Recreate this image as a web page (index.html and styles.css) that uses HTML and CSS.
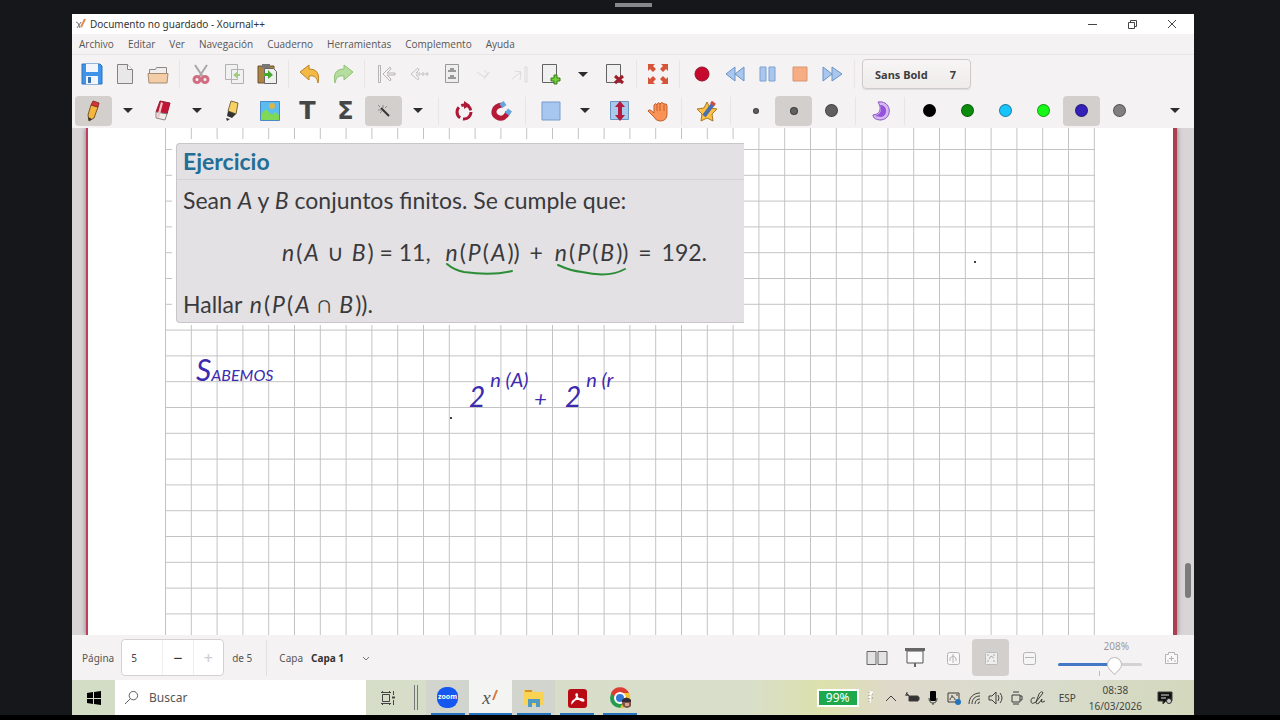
FILE: index.html
```html
<!DOCTYPE html>
<html lang="es">
<head>
    <meta charset="UTF-8">
    <meta name="viewport" content="width=device-width, initial-scale=1.0">
    <title>Documento no guardado - Xournal++</title>
    <link rel="stylesheet" href="styles.css">
</head>
<body>
    <div class="share-handle"></div>
    <div class="window">
        <header class="titlebar">
            <svg class="app-icon" viewBox="0 0 12 12"><path d="M1 4l2 1 2 5M6 4L2 10" stroke="#777" fill="none"/><path d="M10 1L6 9" stroke="#e08a50" stroke-width="2"/></svg>
            <h1>Documento no guardado - Xournal++</h1>
            <div class="window-buttons">
                <button aria-label="Minimizar"><svg viewBox="0 0 10 10"><path d="M1 5.500h9"/></svg></button>
                <button aria-label="Restaurar"><svg viewBox="0 0 10 10"><path d="M1.500 3.500h6v6h-6zM3.500 3V1.500h6v6H8"/></svg></button>
                <button aria-label="Cerrar"><svg viewBox="0 0 10 10"><path d="M1 1l8 8M9 1L1 9"/></svg></button>
            </div>
        </header>

        <nav class="menubar">
            <a href="#">Archivo</a>
            <a href="#">Editar</a>
            <a href="#">Ver</a>
            <a href="#">Navegación</a>
            <a href="#">Cuaderno</a>
            <a href="#">Herramientas</a>
            <a href="#">Complemento</a>
            <a href="#">Ayuda</a>
        </nav>

        <div class="toolbar main-tools">
            <button aria-label="Guardar"><svg viewBox="0 0 22 22"><path d="M1 1h18l2 2v18H1z" fill="#3f93e8" stroke="#2f72bd"/><path d="M5 1h12v8H5zM5 13h12v8H5z" fill="#f2f6fb"/><path d="M7 14h3v6H7z" fill="#3573b5"/></svg></button>
            <button aria-label="Nuevo"><svg viewBox="0 0 22 22"><path d="M3.500 1.500h10l5 5v14h-15z" fill="#e9e8e9" stroke="#858285"/><path d="M13.500 1.500v5h5" fill="#fff" stroke="#858285"/></svg></button>
            <button aria-label="Abrir"><svg viewBox="0 0 22 22"><path d="M2.500 18V6.500h6l1-2h10V18" fill="#eee" stroke="#8f8781"/><path d="M1 10.500h20l-1 9.500H2z" fill="#f2cda7" stroke="#a98b70"/></svg></button>
            <span class="sep"></span>
            <button aria-label="Cortar"><svg class="faded" viewBox="0 0 22 22"><path d="M5 2l8 12M17 2L9 14" stroke="#777" stroke-width="2"/><circle cx="7" cy="16.500" r="3" fill="none" stroke="#bb1837" stroke-width="3"/><circle cx="15" cy="16.500" r="3" fill="none" stroke="#bb1837" stroke-width="3"/></svg></button>
            <button aria-label="Copiar"><svg class="faded" viewBox="0 0 22 22"><path d="M2.500 1.500h12v15h-12zM8.500 6.500h12v14h-12z" fill="#f1f1f1" stroke="#888"/><path d="M15 8l-5 4 5 4v-3h2v-2h-2z" fill="#68b538"/></svg></button>
            <button aria-label="Pegar"><svg viewBox="0 0 22 22"><path d="M2 3h16v17H2z" fill="#ad8341" stroke="#6d522c"/><path d="M6 1h8v4H6z" fill="#777"/><path d="M8.500 5.500h9l3 3v12h-12z" fill="#efefef" stroke="#666"/><path d="M8 10h4V7l5 5-5 4v-3H8z" fill="#48a832"/></svg></button>
            <span class="sep"></span>
            <button aria-label="Deshacer"><svg viewBox="0 0 22 22"><path d="M1 9l9-7v4c8 0 11 5 9 14-1-5-3-8-9-7v4z" fill="#f4b944" stroke="#b98527"/></svg></button>
            <button aria-label="Rehacer"><svg viewBox="0 0 22 22"><path d="M21 9l-9-7v4C4 6 1 11 3 20c1-5 3-8 9-7v4z" fill="#b5dd9d" stroke="#8bc375"/></svg></button>
            <span class="sep"></span>
            <button aria-label="Primera página"><svg class="pale" viewBox="0 0 22 22"><path d="M3.500 2.500h2v17h-2zM8 11l7-7 1 2-4 4h8v2h-8l4 4-1 2z"/></svg></button>
            <button aria-label="Página anterior"><svg class="paler" viewBox="0 0 22 22"><path d="M3 11l7-6 1 2-3 3h4v2H8l3 3-1 2zM14 10h2v2h-2zM18 10h2v2h-2z"/></svg></button>
            <button aria-label="Ir a página"><svg class="pale" viewBox="0 0 22 22"><path d="M4.500 1.500h13v18h-13z" fill="#eee" stroke="#999"/><path d="M7 8h8M9 6h4M7 15h8M9 13h4" stroke="#999" stroke-width="2"/></svg></button>
            <button aria-label="Página siguiente"><svg class="palest" viewBox="0 0 22 22"><path d="M3 9l7 5 6-5M10 7l4 4-4 5"/></svg></button>
            <button aria-label="Última página"><svg class="palest" viewBox="0 0 22 22"><path d="M5 16l9-7-1 8M8 8l6 1M18 4h2v15h-2z"/></svg></button>
            <button aria-label="Insertar página"><svg viewBox="0 0 22 22"><path d="M2.500 1.500h14v18h-14z" fill="#f0f0f0" stroke="#626262"/><path d="M14 12h3v3h3v3h-3v3h-3v-3h-3v-3h3z" fill="#72cf35" stroke="#397b1e"/></svg></button>
            <button class="caret" aria-label="Tipo de página"></button>
            <button aria-label="Borrar página"><svg viewBox="0 0 22 22"><path d="M2.500 1.500h14v18h-14z" fill="#f0f0f0" stroke="#626262"/><path d="M11 13l8 7M19 13l-8 7" stroke="#9d1d2b" stroke-width="3"/></svg></button>
            <span class="sep"></span>
            <button aria-label="Pantalla completa"><svg viewBox="0 0 22 22"><path d="M1 1h7L6 3l3 3-3 3-3-3-2 2zM21 1h-7l2 2-3 3 3 3 3-3 2 2zM1 21h7l-2-2 3-3-3-3-3 3-2-2zM21 21h-7l2-2-3-3 3-3 3 3 2-2z" fill="#d65538"/></svg></button>
            <span class="sep"></span>
            <button aria-label="Grabar"><svg viewBox="0 0 22 22"><circle cx="12" cy="11" r="7" fill="#c6092d" stroke="#91112b"/></svg></button>
            <button aria-label="Retroceder"><svg viewBox="0 0 22 22"><path d="M12 4v14L3 11zM21 4v14l-9-7z" fill="#a9c7ec" stroke="#6b93c9"/></svg></button>
            <button aria-label="Pausa"><svg viewBox="0 0 22 22"><path d="M4 4h6v14H4zM13 4h6v14h-6z" fill="#a9c7ec" stroke="#7da1d2"/></svg></button>
            <button aria-label="Detener"><svg viewBox="0 0 22 22"><path d="M4 4h14v14H4z" fill="#f6ad83" stroke="#d99471"/></svg></button>
            <button aria-label="Avanzar"><svg viewBox="0 0 22 22"><path d="M1 4v14l9-7zM10 4v14l10-7z" fill="#a9c7ec" stroke="#6b93c9"/></svg></button>
            <span class="sep"></span>
            <button class="font-button"><span>Sans Bold</span><span>7</span></button>
        </div>

        <div class="toolbar pen-tools">
            <button class="active" aria-label="Lápiz"><svg viewBox="0 0 22 22"><path d="M8 5l7 2-4 11-5 3-1-6z" fill="#f5b63c" stroke="#795325"/><path d="M8 5l2-4 6 2-1 4z" fill="#d33531" stroke="#92302d"/><path d="M5 17l4 2-3 2z" fill="#333"/></svg></button>
            <button class="caret" aria-label="Opciones del lápiz"></button>
            <button aria-label="Borrador"><svg viewBox="0 0 22 22"><path d="M8 1l10 2-3 11-11-2z" fill="#c41436" stroke="#961b33"/><path d="M4 12l11 2-2 6-9-2z" fill="#f4eaea" stroke="#888"/><path d="M9 2l2 1-4 15-2-1z" fill="#f0c2c8"/></svg></button>
            <button class="caret" aria-label="Opciones del borrador"></button>
            <button aria-label="Resaltador"><svg viewBox="0 0 22 22"><path d="M10 1l7 2-2 11-8-3z" fill="#f8d165" stroke="#77683e"/><path d="M7 11l8 3-4 4-5-2zM5 18l4 1-3 2z" fill="#333"/></svg></button>
            <button aria-label="Imagen"><svg viewBox="0 0 22 22"><path d="M1.500 1.500h19v19h-19z" fill="#59bdf2" stroke="#4a8ac5"/><path d="M2 14l5-5 6 6 3-3 4 3v5H2z" fill="#7fd957"/><circle cx="13" cy="6" r="3" fill="#dbb54c"/></svg></button>
            <button class="letter" aria-label="Texto">T</button>
            <button class="letter" aria-label="Fórmula">Σ</button>
            <button class="active" aria-label="Reconocedor de formas"><svg viewBox="0 0 22 22"><path d="M8 8l8 8" stroke="#333" stroke-width="2"/><path d="M5 10h3M10 5v3M12 8l2-2M7 13l2-2M5 5l2 2" stroke="#888"/></svg></button>
            <button class="caret" aria-label="Más formas"></button>
            <span class="sep"></span>
            <button aria-label="Ajuste de rotación"><svg viewBox="0 0 22 22"><circle cx="11" cy="12" r="7" fill="none" stroke="#ae1938" stroke-width="3" stroke-dasharray="12 3"/><path d="M11 1l6 4-6 4z" fill="#ae1938"/></svg></button>
            <button aria-label="Ajuste a la cuadrícula"><svg viewBox="0 0 22 22"><path d="M11 5C2 6 1 14 6 17c5 3 9 0 11-5" fill="none" stroke="#b51b39" stroke-width="5"/><path d="M10 6l4-3M16 14l3-4" stroke="#65a6df" stroke-width="5"/></svg></button>
            <span class="sep"></span>
            <button aria-label="Seleccionar rectángulo"><svg viewBox="0 0 22 22"><path d="M2 2h18v18H2z" fill="#a7c7f1" stroke="#779ac9"/></svg></button>
            <button class="caret" aria-label="Tipos de selección"></button>
            <button aria-label="Espacio vertical"><svg viewBox="0 0 22 22"><path d="M1.500 1.500h18v18h-18z" fill="#a9c9ed" stroke="#6c96c4"/><path d="M11 1l5 6h-3v8h3l-5 6-5-6h3V7H6z" fill="#b31c3b"/></svg></button>
            <button aria-label="Mano"><svg viewBox="0 0 22 22"><path d="M7 13V5q2-3 3 0 1-4 3-1 2-3 4 0 3-1 3 2v8q0 7-7 7-4 0-6-4l-6-6q1-3 6 2z" fill="#fb9356" stroke="#bf602d"/><path d="M10 5v6M13 4v7M17 5v6" stroke="#bf602d"/></svg></button>
            <span class="sep"></span>
            <button aria-label="Predeterminado"><svg viewBox="0 0 22 22"><path d="M11 2l3 6 7 1-5 5 1 7-6-3-6 3 1-7-5-5 7-1z" fill="#ffc13f" stroke="#a87727"/><path d="M8 16L17 4" stroke="#496fae" stroke-width="4"/><path d="M15 2l4 3" stroke="#d44b3f" stroke-width="3"/></svg></button>
            <span class="sep"></span>
            <button aria-label="Fino"><span class="dot small"></span></button>
            <button class="active" aria-label="Medio"><span class="dot medium"></span></button>
            <button aria-label="Grueso"><span class="dot thick"></span></button>
            <span class="sep"></span>
            <button aria-label="Relleno"><svg viewBox="0 0 22 22"><path d="M8 2c14-2 15 17 3 18-5 0-8-2-8-5l4-1c4-3 4-7 1-12z" fill="#d5b8f0" stroke="#8d55c4"/><path d="M10 5c8 0 8 11 1 12l-6-1c6-2 7-6 5-11z" fill="#9552dc"/></svg></button>
            <span class="sep"></span>
            <button aria-label="Negro"><span class="dot black"></span></button>
            <button aria-label="Verde"><span class="dot green"></span></button>
            <button aria-label="Celeste"><span class="dot cyan"></span></button>
            <button aria-label="Verde claro"><span class="dot lime"></span></button>
            <button class="active" aria-label="Azul"><span class="dot blue"></span></button>
            <button aria-label="Gris"><span class="dot gray"></span></button>
            <button class="caret last" aria-label="Más herramientas"></button>
        </div>

        <main class="canvas">
            <div class="sheet">
                <svg class="grid" aria-hidden="true">
                    <defs>
                        <pattern id="squares" x="0" y="21" width="25.800" height="25.800" patternUnits="userSpaceOnUse">
                            <path d="M0 .5H25.800M.5 0V25.800" stroke="#c3c3c3" fill="none"/>
                        </pattern>
                    </defs>
                    <rect width="930" height="100%" fill="url(#squares)"/>
                </svg>
                <section class="exercise">
                    <h2>Ejercicio</h2>
                    <p>Sean <i>A</i> y <i>B</i> conjuntos finitos. Se cumple que:</p>
                    <p class="math formula">
                        <span><i>n</i>(<i>A</i> ∪ <i>B</i>) <span class="op">=</span> 11,</span>
                        <span><i>n</i>(<i>P</i>(<i>A</i>)) <span class="op">+</span> <i>n</i>(<i>P</i>(<i>B</i>)) <span class="op">=</span> 192.</span>
                    </p>
                    <p class="math">Hallar <i>n</i>(<i>P</i>(<i>A</i> ∩ <i>B</i>)).</p>
                </section>
                <!-- pen strokes and notes, placed freely on the page -->
                <svg class="ink" aria-hidden="true">
                    <path d="M359 136q7 6 17 8 28 4 48-1M470 137q13 6 24 7 27 6 43-3" stroke="#2c8d37" stroke-width="2" fill="none" stroke-linecap="round"/>
                    <circle cx="363" cy="290" r="1"/>
                    <circle cx="887" cy="134" r="1"/>
                </svg>
                <p class="note note-left"><span>S</span>ABEMOS</p>
                <p class="note note-power first">2<sup>n (A)</sup></p>
                <p class="note note-plus">+</p>
                <p class="note note-power second">2<sup>n (r</sup></p>
            </div>
            <div class="scroll-thumb"></div>
        </main>

        <div class="statusbar">
            <label for="page">Página</label>
            <div class="spin">
                <input id="page" type="text" value="5">
                <button aria-label="Menos">−</button>
                <button aria-label="Más" disabled>+</button>
            </div>
            <span>de 5</span>
            <span class="status-sep"></span>
            <label for="layer">Capa</label>
            <select id="layer"><option>Capa 1</option></select>
            <div class="view-tools">
                <button aria-label="Páginas emparejadas"><svg viewBox="0 0 22 22"><path d="M1 4.500h9v13H1zM12 4.500h9v13h-9z" fill="#e3e3e3" stroke="#666"/></svg></button>
                <button aria-label="Presentación"><svg viewBox="0 0 22 22"><path d="M3 4h16v12H3z" fill="#fafafa" stroke="#555"/><path d="M1 1h20v3H1zM10 16h2v4h-2z" fill="#666"/></svg></button>
                <button aria-label="Ajustar al ancho"><svg class="pale" viewBox="0 0 22 22"><rect x="5.500" y="5.500" width="12" height="12" rx="2" fill="#f9f9f9"/><path d="M8 14v-3l3-2 3 2v3M11 7v9"/></svg></button>
                <button class="active" aria-label="Zoom de página"><svg viewBox="0 0 22 22"><rect x="5.500" y="5.500" width="12" height="12" rx="1" fill="#eee" stroke="#bbb"/><path d="M9 12l2-3 3 2M7 8h2M13 8h2M7 14h2M13 14h2" stroke="#aaa" fill="none"/></svg></button>
                <button aria-label="Zoom al 100%"><svg class="pale" viewBox="0 0 22 22"><rect x="5.500" y="5.500" width="12" height="12" rx="2" fill="#f5f5f5"/><path d="M7 10.500h9"/></svg></button>
                <div class="zoom">
                    <label for="zoom">208%</label>
                    <input id="zoom" type="range" min="0" max="290" value="208">
                    <span class="tick"></span>
                </div>
                <button aria-label="Acercar"><svg class="pale" viewBox="0 0 22 22"><path d="M4.500 7.500h3v-2h6v2h3v9h-12z" fill="#f9f9f9"/><path d="M8 11.500h5M10.500 9v5M6 14h2M13 14h2"/></svg></button>
            </div>
        </div>

        <footer class="taskbar">
            <button class="start" aria-label="Inicio"><svg viewBox="0 0 16 16"><path d="M1 3l6-1v6H1zM8 2l7-1v7H8zM1 9h6v5l-6-1zM8 9h7v6l-7-1z"/></svg></button>
            <div class="search">
                <svg viewBox="0 0 16 16"><circle cx="10" cy="6" r="4.500"/><path d="M7 9l-6 6"/></svg>
                <input type="text" placeholder="Buscar" aria-label="Buscar">
            </div>
            <button class="task-view" aria-label="Vista de tareas"><svg viewBox="0 0 16 16"><path d="M2.500 4.500h7v7h-7zM2.500 1v2M9.500 1v2M2.500 13v2M9.500 13v2M1 2.500h10M1 13.500h10M13.500 1v4M13.500 10v5"/><path d="M12 7.500h3" stroke-width="2"/></svg></button>
            <span class="grip"></span>
            <div class="apps">
                <button class="open"><span class="zoom-logo">zoom</span></button>
                <button class="current"><span class="x-logo">x<svg viewBox="0 0 8 14"><path d="M6 1L2 11" stroke="#d87942" stroke-width="2"/></svg></span></button>
                <button class="open" aria-label="Explorador"><svg viewBox="0 0 22 22"><path d="M1 3h8l2 2h10v13H1z" fill="#fbd354"/><path d="M2 3h7v2H2z" fill="#d79426"/><path d="M5 20v-8h12v8h-4v-4H9v4z" fill="#519bc3"/></svg></button>
                <button aria-label="Acrobat"><svg viewBox="0 0 22 22"><rect x="2" y="2" width="19" height="19" rx="3" fill="#b80b14"/><path d="M6 16c5-5 6-8 5-9-2-1-1 5 6 7 2 0 0-3-4-2-4 0-7 2-7 4z" stroke="#fff" stroke-width="1.500" fill="none"/></svg></button>
                <button aria-label="Chrome"><svg viewBox="0 0 22 22"><circle cx="11" cy="11" r="10" fill="#269b50"/><path d="M2 6A10 10 0 0 1 20 6l-9 1-4 5z" fill="#dc3d32"/><path d="M20 6q5 15-9 15l5-9-5-6z" fill="#f6c52e"/><circle cx="11" cy="11" r="5" fill="#3477d4" stroke="#fff" stroke-width="2"/><circle cx="18" cy="16" r="5" fill="#79554d"/><path d="M13 13q4-5 9 0v2h-9z" fill="#332c35"/><path d="M16 16h4v3h-4z" fill="#d5a68d"/></svg></button>
            </div>
            <div class="tray">
                <span class="battery">99%</span>
                <svg class="narrow" viewBox="0 0 8 16"><path d="M2 3h4M2 7h2M2 11h2" stroke="#fff" stroke-width="3"/><path d="M2 2v12M5 4h2M5 8h2" stroke="#8e9285" stroke-dasharray="1 2"/></svg>
                <svg viewBox="0 0 16 16"><path d="M3 11l5-5 5 5"/></svg>
                <svg viewBox="0 0 16 16"><path d="M5 6h9v5H5zM14 7h1v3h-1" fill="#333"/><path d="M2 3l4 4M1 5h4M3 2v4"/></svg>
                <svg viewBox="0 0 16 16"><rect x="5" y="1" width="6" height="10" rx="1" fill="#000" stroke="none"/><path d="M4 8q0 5 4 5t4-5M8 13v2"/></svg>
                <svg viewBox="0 0 16 16"><path d="M2 3h11v9H2zM4 10c0-4 5-4 5 0M5 6h2M10 5h2"/><circle cx="12" cy="12" r="3" fill="#2474bb" stroke="none"/></svg>
                <svg viewBox="0 0 16 16"><path d="M2 14C2 7 7 3 13 3M5 14c0-5 3-8 8-8M8 14c0-3 2-5 5-5M11 14q0-2 2-2"/></svg>
                <svg viewBox="0 0 16 16"><path d="M1 6h3l4-4v12l-4-4H1zM10 5q2 3 0 6M12 3q4 5 0 10"/></svg>
                <svg viewBox="0 0 16 16"><path d="M3 5h8v7H3zM11 6h2v4h-2M4 2h6M4 14h6"/></svg>
                <svg viewBox="0 0 16 16"><path d="M5 8q-4-1-4 3t5 1l7-9q-1-3-4 1l-3 8q0 3 3 1l3-4q-2 5 3 2"/></svg>
                <span class="lang">ESP</span>
                <time class="clock"><span>08:38</span><span>16/03/2026</span></time>
                <svg class="notice" viewBox="0 0 16 16"><path d="M1 2h14v9H9l-3 3v-3H1z" fill="#111"/><path d="M4 5h8M4 8h5" stroke="#ddd"/><circle cx="12" cy="11" r="2.500" fill="#ccc" stroke="#333"/></svg>
            </div>
        </footer>
    </div>
</body>
</html>
```
FILE: styles.css
```css
* {
    box-sizing: border-box;
}
body {
    margin: 0;
    height: 100vh;
    padding: 14px 86px 5px 72px;
    background: linear-gradient(to top, #000 5px, #15171b 5px);
    font-family: "Noto Sans", sans-serif;
    font-size: 10px;
    color: #555;
}
button {
    border: none;
    background: none;
    padding: 0;
    font: inherit;
    color: inherit;
    display: flex;
    align-items: center;
    justify-content: center;
    flex: none;
}
svg {
    display: block;
    flex: none;
}
.share-handle {
    position: absolute;
    top: 3px;
    left: 50%;
    width: 37px;
    height: 4px;
    margin-left: -25px;
    background: #85878a;
}
.window {
    height: 100%;
    display: flex;
    flex-direction: column;
    background: #f5f2f3;
}

/* title and menu */
.titlebar {
    height: 20px;
    display: flex;
    align-items: center;
    gap: 3px;
    padding-left: 3px;
    background: #fff;
}
.titlebar h1 {
    margin: 0;
    font-size: 10px;
    font-weight: 400;
    color: #333;
}
.app-icon {
    width: 12px;
    height: 12px;
}
.window-buttons {
    display: flex;
    margin-left: auto;
}
.window-buttons button {
    width: 40px;
    height: 20px;
    padding-right: 4px;
}
.window-buttons svg {
    width: 10px;
    height: 10px;
    fill: none;
    stroke: #444;
}
.menubar {
    height: 21px;
    display: flex;
    align-items: center;
    gap: 14px;
    padding-left: 7px;
    border-bottom: 1px solid #e8e5e6;
    font-family: "Open Sans", sans-serif;
}
.menubar a {
    color: #555;
    text-decoration: none;
}

/* toolbars */
.toolbar {
    display: flex;
    align-items: center;
    gap: 1px;
    padding: 0 4px;
}
.main-tools {
    height: 38px;
}
.pen-tools {
    height: 35px;
    padding-left: 3px;
}
.toolbar svg,
.view-tools svg {
    width: 22px;
    height: 22px;
}
.main-tools button {
    width: 32px;
    height: 30px;
}
.pen-tools button {
    width: 37px;
    height: 30px;
    border-radius: 4px;
}
.toolbar .caret {
    width: 30px;
}
.caret::before {
    content: "";
    border: 5px solid transparent;
    border-top-color: #2d2d2d;
    border-bottom: none;
}
.toolbar .last {
    margin-left: auto;
}
.toolbar .active,
.view-tools .active {
    background: #d3cfcd;
}
.sep {
    width: 1px;
    height: 28px;
    margin: 0 4px;
    background: #e8e5e5;
}
.pen-tools .sep {
    margin: 0 5px 0 4px;
}
.faded {
    opacity: .6;
}
.pale,
.paler,
.palest {
    fill: none;
    stroke: #b6b3b4;
}
.paler {
    stroke: #c6c3c4;
}
.palest {
    stroke: #dddadb;
}
.main-tools .font-button {
    width: 109px;
    margin-left: 2px;
    justify-content: space-between;
    padding: 0 14px 0 12px;
    border: 1px solid #cfcbca;
    border-radius: 4px;
    background: linear-gradient(#f7f5f5, #eeebea);
    box-shadow: 0 1px 1px #ddd;
    font-size: 11px;
    font-weight: 700;
    color: #3d3d3d;
}
.pen-tools .letter {
    font-family: "DejaVu Sans", sans-serif;
    font-size: 24px;
    line-height: 30px;
    font-weight: 700;
    color: #454648;
}
.dot {
    width: 13px;
    height: 13px;
    border-radius: 50%;
    border: 1px solid rgba(0, 0, 0, .35);
    background: #606060;
}
.dot.small {
    width: 6px;
    height: 6px;
}
.dot.medium {
    width: 8px;
    height: 8px;
}
.dot.black { background: #000; }
.dot.green { background: #0c8c0c; }
.dot.cyan { background: #18c4fa; }
.dot.lime { background: #18f818; }
.dot.blue { background: #3520b8; }
.dot.gray { background: #808080; }

/* page area */
.canvas {
    position: relative;
    flex: 1;
    min-height: 0;
    padding: 0 17px 0 14px;
    overflow: hidden;
    background: #d9d5d6;
}
.sheet {
    position: relative;
    height: 100%;
    border-left: 2px solid #bf405a;
    border-right: 4px solid #ad3e52;
    background: #fff;
    box-shadow: 0 0 5px #777;
}
.grid {
    position: absolute;
    left: 77px;
    width: 930px;
    height: 100%;
}
.ink {
    position: absolute;
    left: 0;
    top: 0;
    width: 100%;
    height: 100%;
}
.exercise {
    position: absolute;
    left: 88px;
    top: 15px;
    width: 568px;
    height: 180px;
    border: 1px solid #c8c6c8;
    border-right: none;
    border-radius: 4px 0 0 4px;
    background: #e3e1e4;
    box-shadow: -1px -1px 0 3px #fff;
    clip-path: inset(-4px 0 -4px -4px);
    font-family: Lato, sans-serif;
    font-size: 23px;
    line-height: 30px;
    color: #3a3a3c;
}
.exercise h2 {
    margin: 0 0 5px;
    padding: 2px 6px 3px;
    border-bottom: 1px solid #d5d3d6;
    font-size: 23px;
    color: #226e96;
}
.exercise p {
    margin: 0 6px 22px;
}
.exercise .formula {
    display: flex;
    justify-content: space-between;
    padding: 0 31px 0 97px;
}
.math i {
    margin: 0 2px;
}
.op {
    margin: 0 3px;
}
.formula > span:first-child .op {
    margin: 0;
}
.formula > span:last-child .op {
    margin: 0 4px;
}
.note {
    position: absolute;
    margin: 0;
    font-family: Lato, sans-serif;
    font-style: italic;
    line-height: 30px;
    color: #3b2bb0;
}
.note-left {
    left: 108px;
    top: 226px;
    font-size: 16px;
}
.note-left span {
    font-size: 30px;
}
.note-power {
    font-size: 28px;
}
.note sup {
    margin-left: 5px;
    font-size: 20px;
    line-height: 20px;
    vertical-align: 20px;
}
.note-power.first {
    left: 381px;
    top: 241px;
}
.note-power.second {
    left: 477px;
    top: 241px;
}
.note-plus {
    left: 446px;
    top: 256px;
    font-size: 22px;
}
.scroll-thumb {
    position: absolute;
    right: 3px;
    bottom: 37px;
    width: 6px;
    height: 35px;
    border-radius: 3px;
    background: #7c7b7c;
}

/* status bar */
.statusbar {
    height: 45px;
    display: flex;
    align-items: center;
    gap: 8px;
    padding: 0 4px 0 10px;
}
.spin {
    width: 103px;
    height: 37px;
    display: flex;
    margin-left: -1px;
    border: 1px solid #d5d1d0;
    border-radius: 4px;
    background: #fff;
}
.spin input {
    width: 40px;
    padding: 0 9px;
    border: none;
    background: none;
    font: inherit;
    color: #444;
}
.spin button {
    flex: 1;
    border-left: 1px solid #eee;
    font-size: 16px;
    color: #333;
}
.spin button:disabled {
    color: #ccc;
}
.status-sep {
    width: 1px;
    height: 36px;
    margin: 0 4px 0 6px;
    background: #e2dfdf;
}
.statusbar select {
    width: 58px;
    padding: 0;
    appearance: none;
    border: none;
    background: none;
    font: inherit;
    font-weight: 700;
    color: #333;
    background-image: linear-gradient(45deg, transparent 3px, #777 3px, #777 4px, transparent 4px), linear-gradient(-45deg, transparent 3px, #777 3px, #777 4px, transparent 4px);
    background-size: 3px 5px;
    background-position: right 3px bottom 3px, right 0 bottom 3px;
    background-repeat: no-repeat;
}
.view-tools {
    display: flex;
    align-items: center;
    gap: 1px;
    margin-left: auto;
}
.view-tools button {
    width: 37px;
    height: 37px;
    border-radius: 4px;
}
.zoom {
    position: relative;
    width: 84px;
    height: 37px;
    margin: 0 10px;
    display: flex;
    flex-direction: column;
    color: #999;
}
.zoom label {
    line-height: 15px;
    text-align: right;
    padding-right: 13px;
}
.zoom input {
    width: 100%;
    height: 20px;
    margin: 0;
    appearance: none;
    background: none;
}
.zoom input::-webkit-slider-runnable-track {
    height: 3px;
    border-radius: 2px;
    background: linear-gradient(to right, #4478c5 68%, #d5d2d2 68%);
}
.zoom input::-webkit-slider-thumb {
    appearance: none;
    width: 15px;
    height: 15px;
    margin-top: -6px;
    border: 1px solid #c5c1c0;
    border-radius: 50% 50% 0 50%;
    background: #fff;
    transform: rotate(45deg);
}
.tick {
    position: absolute;
    left: 41px;
    bottom: 0;
    width: 1px;
    height: 5px;
    background: #bbb;
}

/* taskbar */
.taskbar {
    height: 35px;
    display: flex;
    align-items: stretch;
    background: linear-gradient(to right, #d3dcc5, #d9decb 60%, #dce1ac 67%, #dfd9cb 73%, #d9dccd 85%, #d3d8bd);
}
.start {
    width: 43px;
}
.start svg {
    width: 16px;
    height: 16px;
}
.search {
    width: 251px;
    display: flex;
    align-items: center;
    gap: 10px;
    padding: 0 9px;
    background: #fff;
}
.search svg {
    width: 15px;
    height: 15px;
    fill: none;
    stroke: #555;
}
.search input {
    flex: 1;
    min-width: 0;
    padding: 0;
    border: none;
    font: inherit;
    font-size: 12px;
}
.search input::placeholder {
    color: #555;
}
.task-view {
    width: 44px;
}
.task-view svg {
    width: 16px;
    height: 16px;
    fill: none;
    stroke: #444;
}
.grip {
    width: 4px;
    height: 25px;
    margin: 5px 0 0 4px;
    border: solid #777;
    border-width: 0 1px;
}
.apps {
    display: flex;
    margin-left: 8px;
}
.apps button {
    width: 43px;
    background: linear-gradient(#2573bd, #2573bd) center bottom / 34px 2px no-repeat;
}
.apps .open {
    background-color: #d2d5cd;
}
.apps .current {
    background-color: #f4f4f2;
    background-size: 100% 2px;
}
.apps svg {
    width: 22px;
    height: 22px;
}
.zoom-logo {
    width: 21px;
    height: 21px;
    border-radius: 9px;
    background: #1557ef;
    color: #fff;
    font-size: 7px;
    font-weight: 700;
    line-height: 20px;
}
.x-logo {
    display: flex;
    font-family: "Liberation Serif", serif;
    font-size: 19px;
    font-style: italic;
    line-height: 20px;
}
.apps .x-logo svg {
    width: 8px;
    height: 16px;
}
.tray {
    display: flex;
    align-items: center;
    gap: 5px;
    margin-left: auto;
    padding-right: 21px;
    color: #444;
}
.tray svg {
    width: 16px;
    height: 16px;
    fill: none;
    stroke: #3d3d3d;
}
.tray .narrow {
    width: 8px;
    margin-right: 3px;
}
.battery {
    width: 42px;
    margin-right: 3px;
    border: 2px solid #fff;
    background: #1ca84b;
    color: #fff;
    font-size: 12px;
    line-height: 14px;
    text-align: center;
}
.lang {
    margin-left: 8px;
}
.clock {
    display: flex;
    flex-direction: column;
    align-items: center;
    margin: 0 10px 0 8px;
    line-height: 16px;
}
```
